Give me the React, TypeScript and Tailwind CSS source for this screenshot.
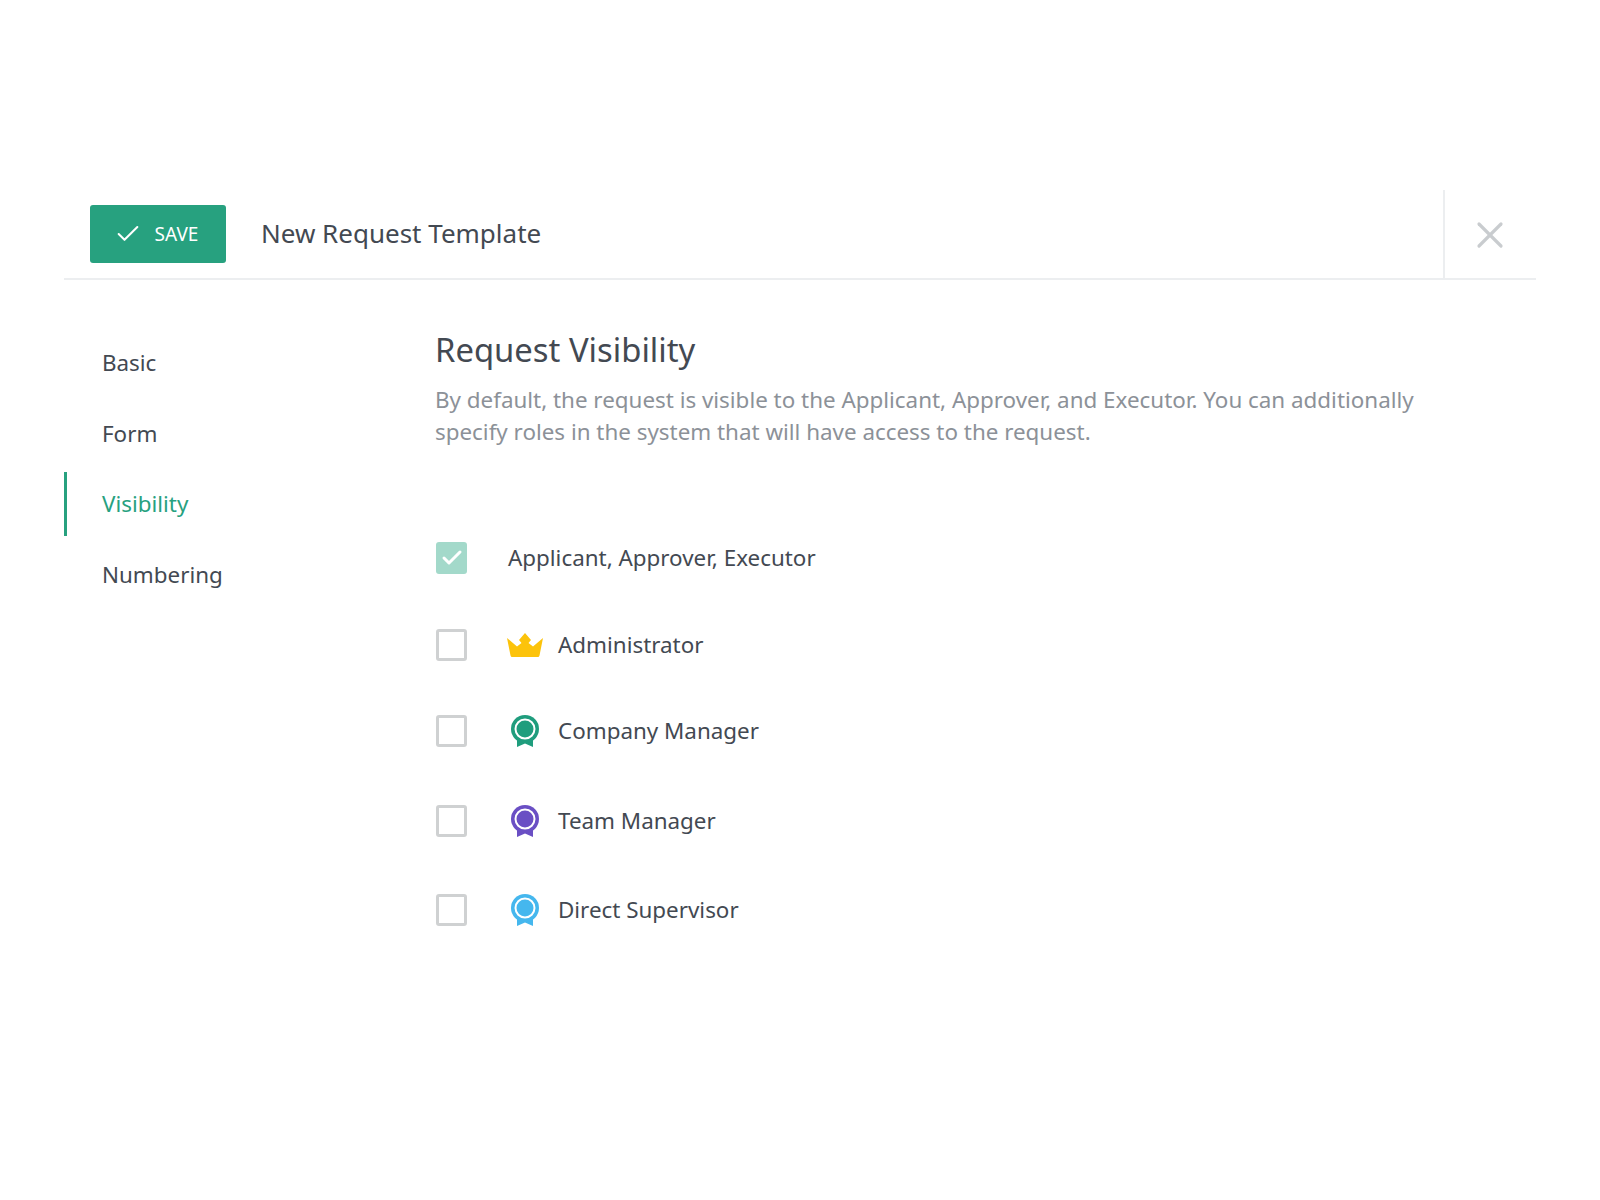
import { X, Check } from 'lucide-react';

const navItems = [
  { label: 'Basic', active: false },
  { label: 'Form', active: false },
  { label: 'Visibility', active: true },
  { label: 'Numbering', active: false }
];

function Crown() {
  return (
    <svg width="36" height="24" viewBox="0 0 36 24" className="shrink-0">
      <path
        d="M18 0 L24 7 L21.5 10 L26 13.5 L36 5 L32.5 22.5 Q32 24 31 24 L5 24 Q4 24 3.5 22.5 L0 5 L10 13.5 L14.5 10 L12 7 Z"
        fill="#fcc30b"
      />
    </svg>
  );
}

function Medal({ color }: { color: string }) {
  return (
    <svg width="28" height="32" viewBox="0 0 28 32" className="shrink-0">
      <path d="M6 20 L6 32 L14 28.5 L22 32 L22 20 Z" fill={color} />
      <circle cx="14" cy="14" r="14" fill={color} />
      <circle cx="14" cy="14" r="9.5" fill={color} stroke="#fff" strokeWidth="2" />
    </svg>
  );
}

const roles = [
  { label: 'Administrator', icon: <Crown />, rowClass: 'mt-[55px]' },
  { label: 'Company Manager', icon: <Medal color="#1f9d7d" />, rowClass: 'mt-[54px]' },
  { label: 'Team Manager', icon: <Medal color="#6a4fc4" />, rowClass: 'mt-[58px]' },
  { label: 'Direct Supervisor', icon: <Medal color="#45b7ee" />, rowClass: 'mt-[57px]' }
];

export default function App() {
  return (
    <div className="min-h-[1200px] bg-white pt-[190px] px-[64px] font-['Noto_Sans',sans-serif] text-[#434952]">
      <header className="flex h-[90px] items-stretch border-b-2 border-[#eceef0]">
        <div className="flex flex-1 items-center pl-[26px]">
          <button className="flex h-[58px] w-[136px] items-center justify-center gap-[13px] rounded-[3px] bg-[#27a17f] pr-[4px] text-[19px] text-white">
            <Check className="h-[28px] w-[28px]" strokeWidth={1.75} />
            <span>SAVE</span>
          </button>
          <h1 className="ml-[35px] pb-[2px] text-[26px]">New Request Template</h1>
        </div>
        <div className="flex w-[93px] items-center justify-center border-l-2 border-[#eceef0] pt-[2px] pr-[2px]">
          <X className="h-[44px] w-[44px] text-[#c9cccf]" strokeWidth={1.75} />
        </div>
      </header>

      <div className="flex">
        <nav className="w-[371px] shrink-0 pt-[51px]">
          {navItems.map((item) => (
            <div
              key={item.label}
              className={`mb-[6.5px] flex h-[64px] items-center pl-[38px] text-[22.4px] ${
                item.active ? 'border-l-[3px] border-[#27a17f] !pl-[35px] text-[#27a17f]' : ''
              }`}
            >
              {item.label}
            </div>
          ))}
        </nav>

        <main className="flex-1 pt-[46px]">
          <h2 className="text-[32.8px] leading-[48px]">Request Visibility</h2>
          <p className="mt-[10px] w-[1000px] text-[22.4px] leading-[32px] text-[#8c9198]">
            By default, the request is visible to the Applicant, Approver, and Executor. You can additionally specify
            roles in the system that will have access to the request.
          </p>

          <div className="mt-[94px] flex items-center pl-[1px]">
            <div className="flex h-[32px] w-[31px] items-center justify-center rounded-[3px] bg-[#a3d9ca]">
              <Check className="h-[24px] w-[24px] text-white" strokeWidth={3} />
            </div>
            <span className="ml-[41px] text-[22.4px] leading-[32px]">Applicant, Approver, Executor</span>
          </div>

          {roles.map((role) => (
            <div key={role.label} className={`flex items-center pl-[1px] ${role.rowClass}`}>
              <div className="h-[32px] w-[31px] rounded-[3px] border-[3px] border-[#cfd1d2]" />
              <div className="ml-[40px] flex w-[36px] justify-center">{role.icon}</div>
              <span className="ml-[15px] text-[22.4px] leading-[32px]">{role.label}</span>
            </div>
          ))}
        </main>
      </div>
    </div>
  );
}
